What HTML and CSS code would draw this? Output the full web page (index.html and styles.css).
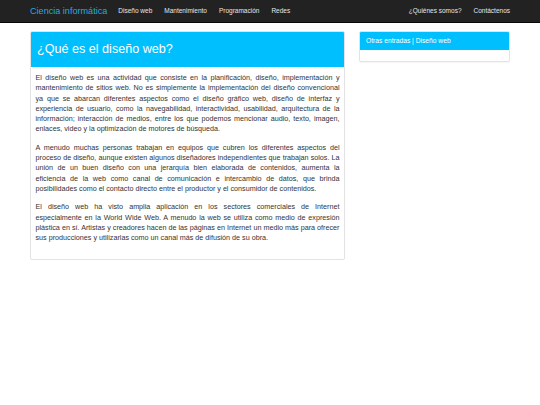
FILE: index.html
```html
<!DOCTYPE html>
<html lang="es">
<head>
<meta charset="utf-8">
<title>Ciencia informática</title>
<link rel="stylesheet" href="styles.css">
</head>
<body>
<nav class="navbar">
  <div class="nav-inner">
    <a class="brand" href="#">Ciencia informática</a>
    <ul class="nav-links">
      <li><a href="#">Diseño web</a></li>
      <li><a href="#">Mantenimiento</a></li>
      <li><a href="#">Programación</a></li>
      <li><a href="#">Redes</a></li>
    </ul>
    <ul class="nav-links nav-right">
      <li><a href="#">¿Quiénes somos?</a></li>
      <li><a href="#">Contáctenos</a></li>
    </ul>
  </div>
</nav>
<main class="container">
  <section class="panel main-panel">
    <h2 class="panel-heading big">¿Qué es el diseño web?</h2>
    <div class="panel-body">
      <p>El diseño web es una actividad que consiste en la planificación, diseño, implementación y mantenimiento de sitios web. No es simplemente la implementación del diseño convencional ya que se abarcan diferentes aspectos como el diseño gráfico web, diseño de interfaz y experiencia de usuario, como la navegabilidad, interactividad, usabilidad, arquitectura de la información; interacción de medios, entre los que podemos mencionar audio, texto, imagen, enlaces, video y la optimización de motores de búsqueda.</p>
      <p>A menudo muchas personas trabajan en equipos que cubren los diferentes aspectos del proceso de diseño, aunque existen algunos diseñadores independientes que trabajan solos. La unión de un buen diseño con una jerarquía bien elaborada de contenidos, aumenta la eficiencia de la web como canal de comunicación e intercambio de datos, que brinda posibilidades como el contacto directo entre el productor y el consumidor de contenidos.</p>
      <p>El diseño web ha visto amplia aplicación en los sectores comerciales de Internet especialmente en la World Wide Web. A menudo la web se utiliza como medio de expresión plástica en sí. Artistas y creadores hacen de las páginas en Internet un medio más para ofrecer sus producciones y utilizarlas como un canal más de difusión de su obra.</p>
    </div>
  </section>
  <aside class="panel side-panel">
    <div class="panel-heading small">Otras entradas | Diseño web</div>
    <div class="side-body"></div>
  </aside>
</main>
</body>
</html>
```
FILE: styles.css
```css
* { box-sizing: border-box; }
html, body { margin: 0; padding: 0; }
body {
  background: #fff;
  font-family: "Liberation Sans", Arial, sans-serif;
  color: #333;
}
a { text-decoration: none; }
.navbar {
  background: #222;
  border-bottom: 1px solid #080808;
  height: 23px;
}
.nav-inner {
  width: 480px;
  margin: 0 auto;
  height: 22px;
  display: flex;
  align-items: center;
}
.brand {
  color: #2aa9da;
  font-size: 9.1px;
  margin-right: 5px;
  line-height: 22px;
}
.nav-links {
  list-style: none;
  margin: 0;
  padding: 0;
  display: flex;
}
.nav-links a {
  display: block;
  color: #e6e6e6;
  font-size: 6.5px;
  padding: 0 6px;
  line-height: 22px;
}
.nav-right { margin-left: auto; }
.nav-right li:last-child a { padding-right: 0; }
.container {
  width: 480px;
  margin: 8px auto 0;
  display: grid;
  grid-template-columns: 315px 151px;
  column-gap: 14px;
  align-items: start;
}
.panel {
  background: #fff;
  border: 1px solid #e3e3e3;
  border-radius: 2px;
  box-shadow: 0 1px 1px rgba(0,0,0,0.04);
  overflow: hidden;
}
.panel-heading {
  background: #00bfff;
  color: #fff;
  margin: 0;
  font-weight: normal;
}
.panel-heading.big {
  font-size: 12.6px;
  line-height: 15px;
  padding: 10px 6px 10px;
}
.panel-heading.small {
  font-size: 6.7px;
  line-height: 10px;
  padding: 4px 6px 4px;
}
.panel-body {
  padding: 6px 4.5px 8px 4.5px;
}
.panel-body p {
  margin: 0 0 8px;
  font-size: 7.2px;
  line-height: 10.3px;
  text-align: justify;
  color: #333;
}
.side-body { height: 11px; }
```
